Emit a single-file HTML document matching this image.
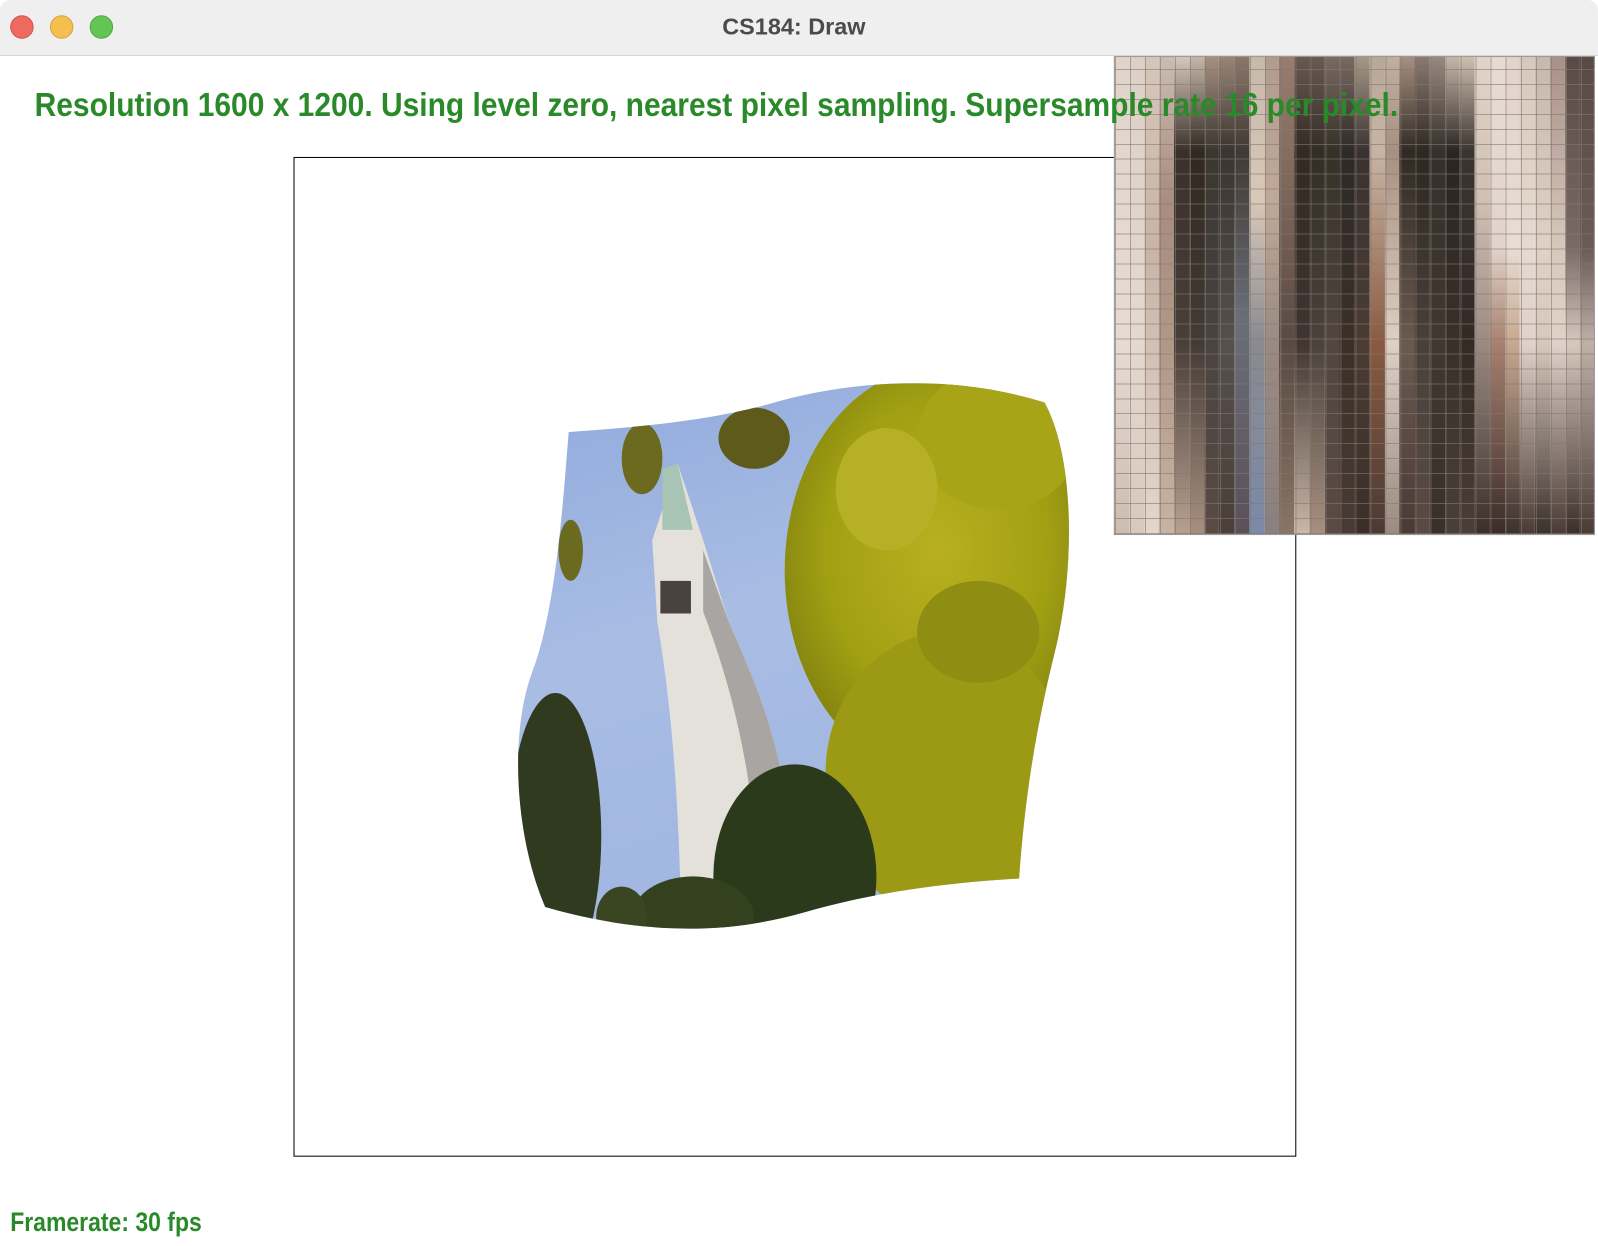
<!DOCTYPE html>
<html><head><meta charset="utf-8"><style>
html,body{margin:0;padding:0;width:1598px;height:1246px;overflow:hidden;background:#fff}
#w{position:absolute;left:0;top:0;width:1568px;height:1223px;transform:scale(1.0191);transform-origin:0 0;font-family:"Liberation Sans",sans-serif}
#tb{position:absolute;left:0;top:0;width:1568px;height:54px;background:#efefef;border-bottom:1px solid #d6d6d6;border-radius:10px 10px 0 0}
.dot{position:absolute;top:15px;width:23px;height:23px;border-radius:50%}
#ttl{position:absolute;left:0;width:1558px;top:13px;text-align:center;font-weight:bold;font-size:23px;color:#4b4b4b}
#cv{position:absolute;left:288px;top:154px;width:982px;height:979px;border:1px solid #000}
#mag{position:absolute;left:1093px;top:55px;width:472px;height:470px;display:flex}
#mag div{flex:1;height:100%}
#grid{position:absolute;left:1093px;top:55px;width:472px;height:470px;background-image:repeating-linear-gradient(90deg,rgba(130,120,115,.6) 0 1px,transparent 1px 14.75px),repeating-linear-gradient(0deg,rgba(130,120,115,.6) 0 1px,transparent 1px 14.69px);border:1px solid #999;box-sizing:border-box}
</style></head><body><div id="w">
<div id="tb">
<div class="dot" style="left:10px;background:#ee6a5f;border:1px solid #d0554b;box-sizing:border-box"></div>
<div class="dot" style="left:49px;background:#f5bf4f;border:1px solid #d6a13d;box-sizing:border-box"></div>
<div class="dot" style="left:88px;background:#62c554;border:1px solid #4ea942;box-sizing:border-box"></div>
<div id="ttl">CS184: Draw</div>
</div>
<div id="cv"></div>
<svg style="position:absolute;left:0;top:0" width="1568" height="1223">
<defs>
<clipPath id="c"><path d="M558,424 C640,418 700,412 760,395 C830,375 930,365 1025,395 C1055,450 1055,560 1035,640 C1015,720 1005,790 1000,862 C930,866 860,875 790,895 C720,915 640,920 535,890 C505,820 500,720 522,660 C545,600 552,500 558,424 Z"/></clipPath>
<linearGradient id="sky" x1="0" y1="0" x2="0.3" y2="1"><stop offset="0" stop-color="#8fa9dc"/><stop offset=".5" stop-color="#a9bde4"/><stop offset="1" stop-color="#9fb5e0"/></linearGradient>
<radialGradient id="tr" cx=".5" cy=".45" r=".6"><stop offset="0" stop-color="#b8b020"/><stop offset=".6" stop-color="#a2a012"/><stop offset="1" stop-color="#7c7d10"/></radialGradient>
</defs>
<g clip-path="url(#c)">
<rect x="500" y="360" width="560" height="570" fill="url(#sky)"/>
<path d="M640,530 L665,455 L690,530 L715,610 C745,680 775,740 780,880 L668,880 C665,780 660,700 645,610 Z" fill="#e4e0da"/>
<path d="M690,540 L715,610 C745,680 775,740 780,880 L745,880 C740,760 720,680 690,600 Z" fill="#a8a5a2"/>
<path d="M650,460 L665,455 L680,520 L650,520 Z" fill="#a7c4b4"/>
<rect x="648" y="570" width="30" height="32" fill="#4a423c"/>
<ellipse cx="920" cy="560" rx="150" ry="200" fill="url(#tr)"/>
<ellipse cx="930" cy="760" rx="120" ry="140" fill="#9c9a14"/>
<ellipse cx="980" cy="430" rx="80" ry="70" fill="#a8a418"/>
<ellipse cx="870" cy="480" rx="50" ry="60" fill="#b5b025"/>
<ellipse cx="960" cy="620" rx="60" ry="50" fill="#8f8e12"/>
<ellipse cx="545" cy="820" rx="45" ry="140" fill="#2f3a1e"/>
<ellipse cx="780" cy="860" rx="80" ry="110" fill="#2c3a1c"/>
<ellipse cx="680" cy="900" rx="60" ry="40" fill="#34411f"/>
<ellipse cx="610" cy="900" rx="25" ry="30" fill="#3a4522"/>
<ellipse cx="630" cy="450" rx="20" ry="35" fill="#6b6a1e"/>
<ellipse cx="740" cy="430" rx="35" ry="30" fill="#5e5a1a"/>
<ellipse cx="560" cy="540" rx="12" ry="30" fill="#6a6a20"/>
</g>
</svg>
<div id="mag">
<div style="background:linear-gradient(#e0d4ca,#e6dbd3 60%,#cdbcb0)"></div>
<div style="background:linear-gradient(#ddd0c6,#e4d8cf 60%,#d8c8bc)"></div>
<div style="background:linear-gradient(#d6c6ba,#c9b4a6 40%,#e3d6cc)"></div>
<div style="background:linear-gradient(#ccbcb0,#a88d80 30%,#b09888 60%,#c8b3a3)"></div>
<div style="background:linear-gradient(#d8c8bc,#3a302b 20%,#4a3e38 60%,#b8a090)"></div>
<div style="background:linear-gradient(#c8b8ab,#30291f 20%,#453b35 60%,#a89080)"></div>
<div style="background:linear-gradient(#a89080,#3a3630 20%,#4a4440 60%,#5a4a44)"></div>
<div style="background:linear-gradient(#9a8577,#3a3530 20%,#55504a 60%,#4a3f3a)"></div>
<div style="background:linear-gradient(#8d776a,#403a34 20%,#6a6e78 55%,#5a5058)"></div>
<div style="background:linear-gradient(#c8b8aa,#d8c8b8 30%,#8a8a90 60%,#7a8aa8)"></div>
<div style="background:linear-gradient(#b09c8e,#c0a898 30%,#9a8a80 60%,#8a8080)"></div>
<div style="background:linear-gradient(#9a7c70,#7a6558 30%,#5a4a42 60%,#8a7565)"></div>
<div style="background:linear-gradient(#6a5a50,#322a24 20%,#403530 60%,#cab8a8)"></div>
<div style="background:linear-gradient(#6a5a50,#332d28 20%,#4a423c 60%,#a89080)"></div>
<div style="background:linear-gradient(#7a6a60,#353028 20%,#524640 60%,#5a4a44)"></div>
<div style="background:linear-gradient(#7a6a60,#2e2a28 20%,#3a3028 60%,#4a3a34)"></div>
<div style="background:linear-gradient(#a89888,#3a3230 20%,#4a3c34 60%,#3a2e28)"></div>
<div style="background:linear-gradient(#b8a898,#c8b4a4 20%,#8a5a40 60%,#4a3a34)"></div>
<div style="background:linear-gradient(#c0b0a0,#a89080 20%,#ddd0c4 60%,#9a8a80)"></div>
<div style="background:linear-gradient(#a89080,#2f2a24 20%,#6a5a50 60%,#4a3a34)"></div>
<div style="background:linear-gradient(#8a7a70,#2e2822 20%,#4a403a 60%,#5a4a44)"></div>
<div style="background:linear-gradient(#9a8a80,#34302a 20%,#403830 60%,#3a302a)"></div>
<div style="background:linear-gradient(#c8b8aa,#2a2522 20%,#3a302a 60%,#4a3e38)"></div>
<div style="background:linear-gradient(#d0c0b0,#3a3430 20%,#332a26 60%,#4a3e38)"></div>
<div style="background:linear-gradient(#e2d4c8,#d0c0b4 30%,#9a8a80 60%,#3a2e2a)"></div>
<div style="background:linear-gradient(#e6dbd2,#e2d4ca 40%,#a88070 60%,#3a2c28)"></div>
<div style="background:linear-gradient(#e2d4ca,#e8dcd3 40%,#c8a890 60%,#3a302c)"></div>
<div style="background:linear-gradient(#d8c8bc,#e6dad0 40%,#e0d2c8 60%,#4a3a34)"></div>
<div style="background:linear-gradient(#c8b8ac,#e0d0c6 40%,#d8c8bc 60%,#3a302c)"></div>
<div style="background:linear-gradient(#a89088,#d8c8bc 40%,#e0d2c8 60%,#4a3a34)"></div>
<div style="background:linear-gradient(#5a4a46,#7a6a66 40%,#d8c8bc 60%,#3a2e2a)"></div>
<div style="background:linear-gradient(#5a4a46,#6a5a58 40%,#c0b0a8 60%,#4a3a34)"></div>
</div>
<div id="grid"></div>
<svg style="position:absolute;left:0;top:0" width="1568" height="1223">
<text x="34" y="114" font-family="Liberation Sans,sans-serif" font-weight="bold" font-size="33" fill="#2a8a2a" textLength="1338" lengthAdjust="spacingAndGlyphs">Resolution 1600 x 1200. Using level zero, nearest pixel sampling. Supersample rate 16 per pixel.</text>
<text x="10" y="1208" font-family="Liberation Sans,sans-serif" font-weight="bold" font-size="26" fill="#2a8a2a" textLength="188" lengthAdjust="spacingAndGlyphs">Framerate: 30 fps</text>
</svg>
</div></body></html>
